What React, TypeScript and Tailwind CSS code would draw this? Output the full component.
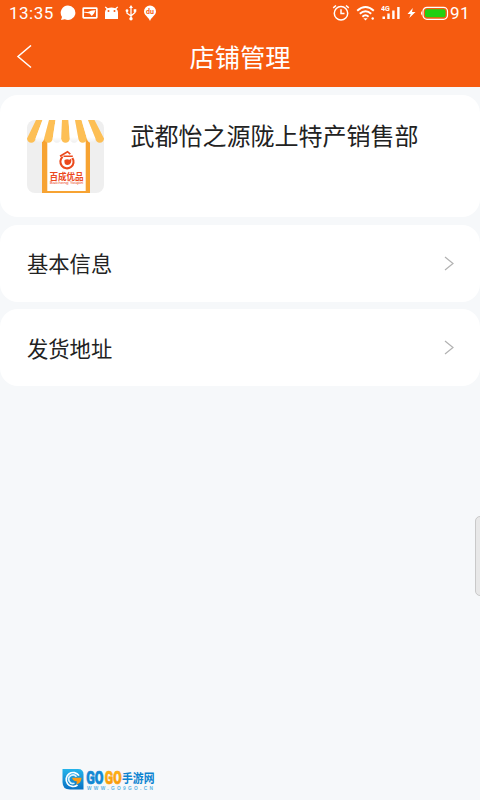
const awningStripes = Array.from({ length: 9 }, (_, i) => {
  const left = i * 8.56;
  const top = 9 + i * 6.5;
  return {
    d: `M${top} 0H${top + 6.5}L${left + 8.56} 18.5a4.28 4.2 0 0 1-8.56 0Z`,
    fill: i % 2 === 0 ? "#fdbf55" : "url(#canvas)",
  };
});

const rows = ["基本信息", "发货地址"];

function StatusBar() {
  return (
    <div className="flex h-[26px] items-center justify-between pl-[9px] pr-[10px] font-['Roboto','Noto_Sans_CJK_SC',sans-serif] text-[17px] leading-[26px]">
      <div className="flex items-center">
        <span className="w-[51px] tracking-[0.5px]">13:35</span>
        <svg width="16" height="16" viewBox="0 0 16 16" fill="currentColor">
          <path d="M8 .6a7.4 7.2 0 1 1-3.2 13.7L1 15l1-3.1A7.2 7.2 0 0 1 8 .6Z" />
        </svg>
        <svg className="ml-[6px]" width="16" height="12" viewBox="0 0 16 12">
          <rect x="1.2" y="1.2" width="13.6" height="9.6" rx="0.6" fill="none" stroke="currentColor" strokeWidth="1.7" />
          <path d="M2 4.8 6 5q3-2 7.5-1.8L12 6.6 9.8 9 7.6 6.6 2 5.6Z" fill="currentColor" />
        </svg>
        <svg className="ml-[6px]" width="15" height="14" viewBox="0 0 15 14" fill="currentColor">
          <path
            fillRule="evenodd"
            d="M1.6.5 3.8 2.2Q7.5.8 11.2 2.2L13.4.5l.8.8-1.7 1.6Q14 4 14 6.3V13H1V6.3Q1 4 2.5 2.9L.8 1.3ZM4.5 4a1 1 0 1 0 0 2 1 1 0 0 0 0-2Zm6 0a1 1 0 1 0 0 2 1 1 0 0 0 0-2Z"
          />
        </svg>
        <svg className="ml-[6px]" width="12" height="16" viewBox="0 0 12 16" fill="none" stroke="currentColor" strokeWidth="1.3">
          <path d="M6 2v11M2 6v2.2L6 11l4-3.5V6" />
          <path d="m6 0 2 3H4Z" fill="currentColor" stroke="none" />
          <circle cx="6" cy="13.8" r="1.7" fill="currentColor" stroke="none" />
          <circle cx="2" cy="5.7" r="1.4" fill="currentColor" stroke="none" />
          <path d="M8.7 4.2h2.6v2.6H8.7Z" fill="currentColor" stroke="none" />
        </svg>
        <svg className="ml-[6px]" width="14" height="16" viewBox="0 0 14 16">
          <path d="M7 .5a6 6 0 0 1 6 6C13 10 8.5 12 7 16 5.5 12 1 10 1 6.5a6 6 0 0 1 6-6Z" fill="currentColor" />
          <text x="7" y="8.8" textAnchor="middle" fontSize="7" fontWeight="700" fill="#f65b10">
            du
          </text>
        </svg>
      </div>
      <div className="flex items-center">
        <svg width="18" height="18" viewBox="0 0 18 18" fill="none" stroke="currentColor" strokeWidth="1.5">
          <circle cx="9" cy="9.2" r="6.7" />
          <path d="M9 5.3v4.3h3.5M1.2 3.9 4 1.5M16.8 3.9 14 1.5" />
        </svg>
        <svg className="ml-[6px]" width="20" height="16" viewBox="0 0 20 16" fill="none" stroke="currentColor" strokeWidth="2">
          <path d="M1.2 5.7Q9.5-1.7 17.8 5.7M3.8 8.8q5.7-5 11.4 0M6.4 11.7q3.1-2.8 6.2 0" />
          <path d="M7.4 13.2h4.2L9.5 15.4Z" fill="currentColor" stroke="none" />
          <circle cx="16.7" cy="13.5" r="1.2" fill="currentColor" stroke="none" />
        </svg>
        <svg className="ml-[5px]" width="20" height="16" viewBox="0 0 20 16" fill="currentColor">
          <text x="0" y="6.4" fontSize="7" fontWeight="700">
            4G
          </text>
          <path d="M1.5 11.5H4V14H1.5ZM6.3 8.5h2.4V14H6.3ZM11.2 5.5h2.4V14h-2.4ZM16.2 2h2.4v12h-2.4Z" />
        </svg>
        <svg className="ml-[6px]" width="9" height="14" viewBox="0 0 9 14" fill="currentColor">
          <path d="M5.8 2 .5 8h3.2L2.3 12 8.5 6H5Z" />
        </svg>
        <svg className="ml-[4px]" width="29" height="15" viewBox="0 0 29 15">
          <rect x="3" y="1.3" width="24.5" height="12" rx="4" fill="none" stroke="currentColor" strokeWidth="1.2" />
          <path d="M2 5Q0 7.2 2 9.5Z" fill="currentColor" />
          <rect x="5" y="3.3" width="20.5" height="8" rx="2" fill="#20d010" />
        </svg>
        <span className="ml-[1px] w-[20px] tracking-[0.4px]">91</span>
      </div>
    </div>
  );
}

function ShopLogo() {
  return (
    <svg className="shrink-0 rounded-[8px]" width="77" height="73" viewBox="0 0 77 73">
      <defs>
        <linearGradient id="canvas" x1="0" y1="0" x2="0" y2="1">
          <stop offset="0.75" stopColor="#ffffff" />
          <stop offset="1" stopColor="#efefef" />
        </linearGradient>
      </defs>
      <rect width="77" height="73" fill="#efefef" />
      <path d="M15 19h48v54H15Z" fill="#f7a332" />
      <path d="M20.3 19h38.4v52H20.3Z" fill="#ffffff" />
      {awningStripes.map((stripe) => (
        <path key={stripe.d} d={stripe.d} fill={stripe.fill} />
      ))}
      <g fill="none" stroke="#eb4a1d">
        <path d="M35.6 36.8A6.6 6.6 0 1 0 45.4 38" strokeWidth="2.1" />
        <path d="m33 36.3 7.5-4.6 2.8 2.4M36.5 36.2h9.3" strokeWidth="1.6" />
      </g>
      <path d="M37.5 40q2.7-1.6 5-.2l1.8-1.2q.7 6.4-3.8 6.5-3.8-.1-3-5.1Z" fill="#eb4a1d" />
      <g fill="#eb4a1d" fontFamily="'Noto Sans CJK SC', sans-serif">
        <text x="22.5" y="60" fontSize="8.6" fontWeight="700" textLength="34">
          百成优品
        </text>
        <text x="22.7" y="63.8" fontSize="3.9" fontFamily="'Liberation Sans', sans-serif" textLength="33.6" lengthAdjust="spacingAndGlyphs">
          Baicheng Youpin
        </text>
      </g>
    </svg>
  );
}

function SiteMark() {
  return (
    <div className="absolute left-[62px] top-[768px]">
      <svg className="overflow-visible" width="94" height="24" viewBox="0 0 94 24">
        <defs>
          <linearGradient id="blue" x1="0" y1="0" x2="0" y2="1">
            <stop offset="0" stopColor="#25b4ea" />
            <stop offset="1" stopColor="#0871c4" />
          </linearGradient>
          <linearGradient id="amber" x1="0" y1="0" x2="0" y2="1">
            <stop offset="0" stopColor="#ffbd16" />
            <stop offset="1" stopColor="#f78e09" />
          </linearGradient>
        </defs>
        <path d="M.5 1H16q5.5 0 5.5 5.5V21.5H8Q.5 21.5.5 14Z" fill="url(#blue)" />
        <path d="M17 7.6A7 7 0 1 0 15.5 17" fill="none" stroke="#fff" strokeWidth="1.7" />
        <path d="M14.5 8.7A4.3 4.3 0 1 0 12.5 15.3" fill="none" stroke="#d9f3ff" strokeWidth="1.7" />
        <path d="M10 9.8h9.5q-.2 5.4-5 6.8l.3-3.4q-3.7.3-4.8-3.4Z" fill="#ff9c13" />
        <g fontFamily="Roboto, sans-serif" fontWeight="900" fontSize="18">
          <text x="24.3" y="16.2" textLength="17.2" lengthAdjust="spacingAndGlyphs" fill="#1288d3" stroke="#1288d3" strokeWidth="0.7">
            GO
          </text>
          <text x="42.8" y="16.2" textLength="16.8" lengthAdjust="spacingAndGlyphs" fill="url(#amber)" stroke="#fba30e" strokeWidth="0.7">
            GO
          </text>
        </g>
        <text x="60" y="15.4" fontSize="12.4" fontWeight="700" textLength="32.5" lengthAdjust="spacingAndGlyphs" fill="#0d84d0" fontFamily="'Noto Sans CJK SC', sans-serif">
          手游网
        </text>
        <text x="25" y="21.8" fontSize="4.8" fontWeight="700" fontFamily="'Liberation Sans', sans-serif" textLength="66" fill="#5bb4e5">
          WWW.GO9GO.CN
        </text>
      </svg>
    </div>
  );
}

export default function App() {
  return (
    <div className="relative h-[800px] w-[480px] overflow-hidden bg-[#f6f8fa] font-['Noto_Sans_CJK_SC',sans-serif] text-[#222222]">
      <header className="h-[87px] bg-[#f65b10] text-white">
        <StatusBar />
        <div className="grid h-[61px] grid-cols-[48px_1fr_48px] items-center">
          <button className="pl-[16px]" aria-label="返回">
            <svg width="17" height="24" viewBox="0 0 17 24" fill="none" stroke="currentColor" strokeWidth="1.5">
              <path d="M15 .5 2 11.5 15 22.5" />
            </svg>
          </button>
          <h1 className="pb-[2px] text-center text-[25.3px] leading-[36px]">店铺管理</h1>
        </div>
      </header>
      <main className="flex flex-col gap-[7.5px] pt-2">
        <section className="flex h-[122px] rounded-[18px] bg-white pl-[27px] pt-[25px]">
          <ShopLogo />
          <h2 className="ml-[26.5px] mt-[-3px] text-[24px] leading-[36px]">武都怡之源陇上特产销售部</h2>
        </section>
        {rows.map((label) => (
          <button key={label} className="flex h-[77px] items-center justify-between rounded-[18px] bg-white pl-[27px] pr-[26px] text-[21.3px]">
            <span>{label}</span>
            <svg width="10" height="15" viewBox="0 0 10 15" fill="none" stroke="#b2b2b2" strokeWidth="1.2">
              <path d="m1 1 8 6.5L1 14" />
            </svg>
          </button>
        ))}
      </main>
      <div className="absolute right-[-6px] top-[516px] h-[80px] w-[11px] rounded-[5px] border border-[#c9c9c9] bg-[#e8e8e8]" />
      <SiteMark />
    </div>
  );
}
